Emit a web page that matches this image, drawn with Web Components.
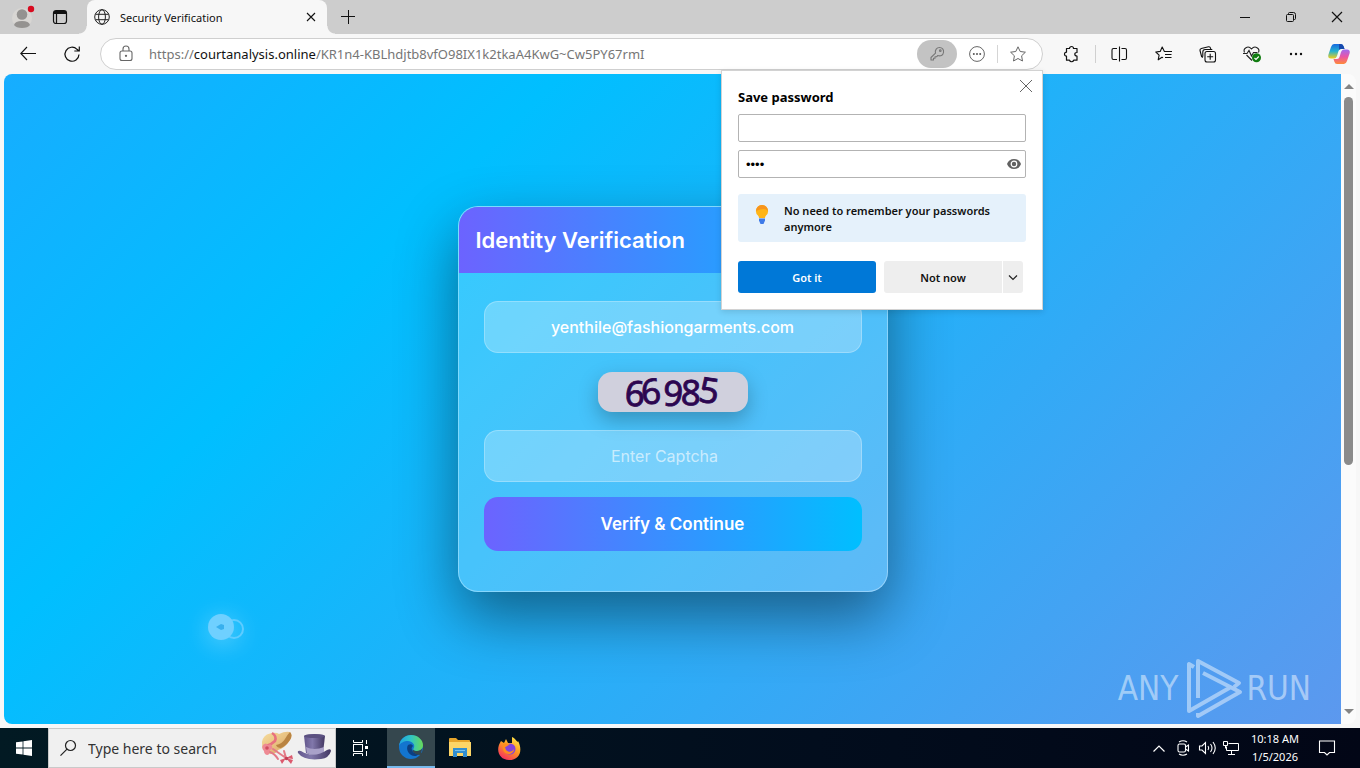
<!DOCTYPE html>
<html lang="en">
<head>
<meta charset="utf-8">
<title>Security Verification</title>
<style>
html, body { margin: 0; height: 100%; }
body { font-family: "Open Sans", "Noto Sans", sans-serif; font-size: 12px; color: #1b1b1b; background: #f7f7f7; overflow: hidden; }
</style>
</head>
<body>
<desk-top></desk-top>
<script>
const define = (name, html) => {
  const t = document.createElement('template');
  t.innerHTML = `<style>*{box-sizing:border-box} button{font:inherit;color:inherit;border:0;background:none;padding:0;margin:0} input{font:inherit;margin:0;outline:0} svg{display:block;overflow:visible}</style>` + html;
  customElements.define(name, class extends HTMLElement {
    constructor() {
      super();
      this.attachShadow({ mode: 'open' }).append(t.content.cloneNode(true));
    }
    connectedCallback() {
      const b = this.shadowRoot.querySelector('[data-label]');
      if (b && this.hasAttribute('label')) b.setAttribute('aria-label', this.getAttribute('label'));
    }
  });
};

define('icon-button', `
<style>
:host{display:flex;flex:none;width:32px}
button{display:flex;align-items:center;justify-content:center;width:100%;height:100%;border-radius:inherit}
</style>
<button type="button" data-label><slot></slot></button>`);

define('browser-tab', `
<style>
:host{display:flex;align-items:center;position:relative;width:240px;height:34px;padding:0 8px 0 7px;background:#f7f7f7;border-radius:8px 8px 0 0}
:host::before,:host::after{content:"";position:absolute;bottom:0;width:8px;height:8px}
:host::before{left:-8px;background:radial-gradient(circle at 0 0,transparent 7px,#f7f7f7 8px)}
:host::after{right:-8px;background:radial-gradient(circle at 100% 0,transparent 7px,#f7f7f7 8px)}
.t{flex:1;margin-left:10px;color:#111;font-family:"Noto Sans",sans-serif;font-size:11px}
icon-button{width:16px;height:16px}
</style>
<svg width="16" height="16" viewBox="0 0 16 16" fill="none" stroke="#222"><circle cx="8" cy="8" r="7.3"/><ellipse cx="8" cy="8" rx="3.4" ry="7.3"/><path d="M1.5 5.3h13M1.5 10.7h13"/></svg>
<span class="t"><slot></slot></span>
<icon-button label="Close tab"><svg width="10" height="10" viewBox="0 0 10 10" stroke="#111" stroke-width="1.1"><path d="M1 1l8 8M9 1l-8 8"/></svg></icon-button>`);

define('title-bar', `
<style>
:host{display:flex;align-items:stretch;height:34px;background:#cdcdcd}
.left{display:flex;align-items:center;width:87px;padding-left:12px;gap:18px}
.left icon-button{width:20px;height:24px}
.new{width:42px}
.space{flex:1}
.win{width:46px}
</style>
<div class="left">
<icon-button label="Profile"><svg width="22" height="22" viewBox="0 0 22 22"><circle cx="11" cy="12" r="10" fill="#d8d6d3"/><circle cx="11" cy="8.500" r="5.300" fill="#949290"/><path d="M3 19q1-4 8-4t8 4q-2 3-8 3t-8-3z" fill="#949290"/><circle cx="20" cy="3" r="3.200" fill="#d80b20"/></svg></icon-button>
<icon-button label="Tab actions"><svg width="16" height="16" viewBox="0 0 16 16" fill="none" stroke="#111" stroke-width="1.200"><rect x="1.500" y="1.500" width="13" height="13" rx="2.500"/><path d="M2 3.500h12" stroke-width="3"/><path d="M4.500 4v10"/></svg></icon-button>
</div>
<browser-tab>Security Verification</browser-tab>
<icon-button class="new" label="New tab"><svg width="14" height="14" viewBox="0 0 14 14" stroke="#111"><path d="M7.500 0v14M0 6.500h14"/></svg></icon-button>
<div class="space"></div>
<icon-button class="win" label="Minimize"><svg width="10" height="10" viewBox="0 0 10 10" stroke="#111"><path d="M0 5.500h10"/></svg></icon-button>
<icon-button class="win" label="Restore"><svg width="10" height="10" viewBox="0 0 10 10" fill="none" stroke="#111"><rect x=".5" y="2.500" width="7" height="7" rx="1"/><path d="M2.500 2V1.500q0-1 1-1h4q2 0 2 2v4q0 1-1 1H8"/></svg></icon-button>
<icon-button class="win" label="Close"><svg width="10" height="10" viewBox="0 0 10 10" stroke="#111" stroke-width="1.200"><path d="M0 0l10 10M10 0L0 10"/></svg></icon-button>`);

define('address-bar', `
<style>
:host{display:flex;align-items:center;height:32px;background:#fff;border:1px solid #cfcfcf;border-radius:16px;padding:0 8px 0 17px}
a{flex:1;margin-left:15px;color:#767676;text-decoration:none;white-space:nowrap;font-family:"Noto Sans",sans-serif;font-size:13px}
b{font-weight:400;color:#111}
.key{width:40px;height:28px;border-radius:14px;background:#c3c3c3;margin-right:4px}
i{width:1px;height:18px;background:#d5d5d5;margin:0 4px}
</style>
<svg width="16" height="18" viewBox="0 0 16 18" fill="none" stroke="#666" stroke-width="1.100"><rect x="2" y="6" width="12" height="9.500" rx="2"/><path d="M5 6V4q0-3 3-3t3 3v2"/><circle cx="8" cy="10.800" r=".6" fill="#666"/></svg>
<a href="#">https://<b>courtanalysis.online</b>/KR1n4-KBLhdjtb8vfO98IX1k2tkaA4KwG~Cw5PY67rmI</a>
<icon-button class="key" label="Passwords"><svg width="16" height="16" viewBox="0 0 16 16" fill="none" stroke="#777" stroke-width="1.100" stroke-linejoin="round"><path d="M6.500 7.200C5.700 4 7.800 1.500 10.500 1.500S15 3.500 14.500 6.500 11.500 10.500 8.800 9.500L7.500 10.800H6V12.300H4.500V14H2v-2.500z"/><circle cx="11.300" cy="4.700" r=".8"/></svg></icon-button>
<icon-button label="More"><svg width="16" height="16" viewBox="0 0 16 16" fill="none" stroke="#666"><circle cx="8" cy="8" r="7.400"/><g fill="#555" stroke="none"><circle cx="4.800" cy="8" r="1"/><circle cx="8" cy="8" r="1"/><circle cx="11.200" cy="8" r="1"/></g></svg></icon-button>
<i></i>
<icon-button label="Add to favorites"><svg width="16" height="16" viewBox="0 0 16 16" fill="none" stroke="#666" stroke-linejoin="round"><path d="M8 .8l2.200 4.700 5.200.7-3.800 3.600.9 5.200L8 12.500 3.500 15l.9-5.200L.6 6.200l5.200-.7z"/></svg></icon-button>`);

define('tool-bar', `
<style>
:host{display:flex;align-items:center;height:40px;padding:0 5px 0 12px;background:#f7f7f7}
icon-button{height:32px;margin-left:12px}
.first{margin-left:0}
address-bar{flex:1;margin-left:12px}
i{width:1px;height:18px;background:#d0d0d0;margin:0 -5px 0 8px}
</style>
<icon-button class="first" label="Back"><svg width="16" height="14" viewBox="0 0 16 14" fill="none" stroke="#111" stroke-width="1.100"><path d="M16 6.500H.8M7 0L.8 6.500 7 13"/></svg></icon-button>
<icon-button label="Refresh"><svg width="16" height="16" viewBox="0 0 16 16" fill="none" stroke="#111" stroke-width="1.200"><path d="M15 8.500A7 7 0 1 1 13 3.300L15 5M15.300 .5V5h-5"/></svg></icon-button>
<address-bar></address-bar>
<icon-button label="Extensions"><svg width="16" height="16" viewBox="0 0 16 16" fill="none" stroke="#111" stroke-width="1.200" stroke-linejoin="round"><path d="M3.500 2.500h3a2 2 0 0 1 4 0h3.500v4q-2.200 0-2.200 1.700T14 10v4.200h-3.300a2.200 2.200 0 0 1-4.200 0h-3v-4a2 2 0 1 1 0-4z"/></svg></icon-button>
<i></i>
<icon-button label="Split screen"><svg width="16" height="16" viewBox="0 0 16 16" fill="none" stroke="#111" stroke-width="1.100"><path d="M6 2.500H2.500q-1.500 0-1.500 1.500v8q0 1.500 1.500 1.500H6M10.500 2.500h3.500q1.500 0 1.500 1.500v8q0 1.500-1.500 1.500h-3.500M8.500 .5v15"/></svg></icon-button>
<icon-button label="Favorites"><svg width="16" height="16" viewBox="0 0 16 16" fill="none" stroke="#111" stroke-width="1.100" stroke-linejoin="round"><path d="M8 11.800l-1-.6-3.800 2.600.9-4.700L.8 6l4.400-.6L7.200 1l2.200 4.500H17M10 8.500h6.500M10 11.500h6.500"/></svg></icon-button>
<icon-button label="Collections"><svg width="16" height="16" viewBox="0 0 16 16" fill="none" stroke="#111" stroke-width="1.100" stroke-linejoin="round"><rect x="6" y="5.500" width="10.500" height="10.500" rx="2"/><path d="M11.200 7.800v6M8.200 10.800h6M3.800 11.500L2.600 10.500 1 4.500q-.3-1.600 1.300-2L9.500.8q1.600-.3 2 1.300l.3.900M3.800 10.500V6q0-2.500 2.500-2.500h7"/></svg></icon-button>
<icon-button label="Browser essentials"><svg width="18" height="16" viewBox="0 0 18 16" fill="none" stroke="#222" stroke-width="1.100"><path d="M10 14.500L4.500 9M2.500 6.500C.7 2.500 6-1.200 9.500 3 13-1.200 18.300 2.500 16.500 6.500M1 7.500h4l2-3 2.500 5.500 2-3.500h4"/><circle cx="14.500" cy="11.800" r="4.500" fill="#107c10" stroke="none"/><path d="M12.500 12l1.500 1.500 2.800-3" stroke="#fff"/></svg></icon-button>
<icon-button label="Settings and more"><svg width="14" height="4" viewBox="0 0 14 4" fill="#111"><circle cx="3" cy="2" r="1.200"/><circle cx="8" cy="2" r="1.200"/><circle cx="13" cy="2" r="1.200"/></svg></icon-button>
<icon-button label="Copilot"><svg width="22" height="20" viewBox="0 0 22 20"><defs><linearGradient id="a" x2="0" y2="1"><stop stop-color="#1769e0"/><stop offset=".5" stop-color="#25b2cf"/><stop offset="1" stop-color="#f3cf18"/></linearGradient><linearGradient id="b" x2="0" y2="1"><stop stop-color="#a06af0"/><stop offset=".5" stop-color="#eb55a5"/><stop offset="1" stop-color="#ff8b38"/></linearGradient></defs><path d="M6 0h7q2 0 2.700 2.500L16.500 5H13q-2 0-2.500 2L9 12q-.8 2.500-3 2.500H3Q-.3 14.500.3 11L3 3q1-3 3-3z" fill="url(#a)"/><path d="M16 20H9q-2 0-2.700-2.500L5.500 15H9q2 0 2.500-2L13 8q.8-2.500 3-2.500h3q3.300 0 2.700 3.500L19 17q-1 3-3 3z" fill="url(#b)"/><path d="M11 0h2q2 0 2.700 2.500L16.500 5H13q-1.500 0-2 1z" fill="#1749ad"/></svg></icon-button>`);

define('identity-card', `
<style>
:host{display:block;width:430px;border:1px solid rgba(255,255,255,.34);border-radius:20px;background:rgba(255,255,255,.2);box-shadow:0 25px 60px rgba(0,0,0,.45);overflow:hidden;color:#fff;font-family:"Inter",sans-serif}
h1{margin:0;height:66px;padding:0 17px;font-size:22px;font-weight:600;line-height:66px;background:linear-gradient(90deg,#6c63ff,#00bfff)}
form{display:flex;flex-direction:column;align-items:center;padding:28px 25px 40px}
input{width:100%;height:52px;border:1px solid rgba(255,255,255,.25);border-radius:14px;background:rgba(255,255,255,.25);text-align:center;color:#fff;font-size:16px;padding:0 16px}
.cap{padding-right:32px}
.mail{font-weight:500}
input::placeholder{color:rgba(255,255,255,.62);opacity:1}
svg{margin:19px 0 18px;border-radius:14px;background:#d0d0dd;box-shadow:0 8px 20px rgba(0,0,0,.25)}
text{font-family:"Noto Sans",sans-serif;font-size:35px;fill:#2c0650;stroke:#2c0650;stroke-width:.8;text-anchor:middle}
button{width:100%;height:54px;margin-top:15px;border-radius:14px;background:linear-gradient(90deg,#6c63ff,#00bfff);font-size:17px;font-weight:600}
</style>
<h1>Identity Verification</h1>
<form>
<input class="mail" type="text" aria-label="Email" value="yenthile@fashiongarments.com">
<svg width="150" height="40" viewBox="0 0 150 40" role="img" aria-label="Captcha"><text x="37" y="34" transform="rotate(3 37 22)">6</text><text x="53" y="32" transform="rotate(-5 53 20)">6</text><text x="75" y="34" transform="rotate(4 75 22)">9</text><text x="93" y="33" transform="rotate(2 93 21)">8</text><text x="111" y="31" transform="rotate(8 111 20)">5</text></svg>
<input class="cap" type="text" aria-label="Captcha" placeholder="Enter Captcha">
<button type="button">Verify &amp; Continue</button>
</form>`);

define('run-watermark', `
<style>
:host{display:flex;align-items:center;gap:6px;color:rgba(255,255,255,.48);font-family:"Liberation Sans Narrow","DejaVu Sans Condensed","Liberation Sans",sans-serif;font-size:33px;line-height:64px}
</style>
<span>ANY</span>
<svg width="56" height="62" viewBox="0 0 56 62" fill="none" stroke="#fff" stroke-width="4" stroke-linejoin="round" opacity=".46"><path d="M10 9L5 6v47l42-24M14 40V3l41 22-5 4M19 15l37 19-42 24v-3"/></svg>
<span>RUN</span>`);

define('scroll-bar', `
<style>
:host{display:flex;flex-direction:column;align-items:center;width:15px;padding:10px 0;background:#fbfbfb;border-radius:0 8px 8px 0}
div{flex:1;width:9px;margin:8px 0}
b{display:block;height:61%;border-radius:5px;background:#8b8b8b}
</style>
<svg width="10" height="5" viewBox="0 0 10 5" fill="#858585"><path d="M5 0l5 5H0z"/></svg>
<div><b></b></div>
<svg width="10" height="5" viewBox="0 0 10 5" fill="#858585"><path d="M5 5l5-5H0z"/></svg>`);

define('web-page', `
<style>
:host{display:flex}
main{flex:1;position:relative;display:flex;align-items:center;justify-content:center;border-radius:8px 0 0 8px;background:linear-gradient(135deg,#17adff,#00bfff 28%,#6495ed 106%);overflow:hidden}
run-watermark{position:absolute;right:30px;bottom:3px}
.ptr{position:absolute;left:204px;bottom:81px;filter:drop-shadow(0 4px 12px rgba(255,255,255,.35))}
</style>
<main>
<identity-card></identity-card>
<svg class="ptr" width="36" height="30" viewBox="0 0 36 30"><circle cx="26" cy="16" r="9" fill="none" stroke="#5fccff" stroke-width="2"/><circle cx="13" cy="14" r="13" fill="#6fd0ff"/><path d="M8 14l5-3 3 1v4l-3 1z" fill="#38b0ee"/></svg>
<run-watermark></run-watermark>
</main>
<scroll-bar></scroll-bar>`);

define('save-password', `
<style>
:host{display:block;width:322px;padding:17px 16px 16px;background:#fff;border:1px solid #d2d2d2;color:#111;font-family:"Noto Sans",sans-serif;box-shadow:0 2px 6px rgba(0,0,0,.12)}
h2{margin:0 0 8px;font-size:13px;font-weight:700;line-height:18px;color:#000}
.close{position:absolute;right:8px;top:7px;width:16px;height:16px}
.field{position:relative;display:flex;margin-bottom:8px}
.field input{width:100%;height:28px;border:1px solid #b3b3b3;border-radius:2px;padding:0 30px 0 7px;font-size:12px;background:#fff}
.field .pw{font-family:"Liberation Sans",sans-serif;font-size:13px}
.eye{position:absolute;right:4px;top:6px;width:16px;height:16px}
.tip{display:flex;gap:14px;margin-top:16px;padding:9px 16px 7px;height:48px;background:#e5f1fb;border-radius:3px;font-size:11px;font-weight:600;line-height:16px}
.row{display:flex;margin-top:19px;font-size:11px;font-weight:600}
.row button{height:32px;background:#eee}
.row .ok{width:138px;background:#0078d7;color:#fff;border-radius:3px;margin-right:8px}
.row .no{width:118px;border-radius:3px 0 0 3px;margin-right:1px}
.row .dd{width:20px;border-radius:0 3px 3px 0;display:flex;align-items:center;justify-content:center}
</style>
<h2>Save password</h2>
<icon-button class="close" label="Close"><svg width="12" height="12" viewBox="0 0 12 12" stroke="#666"><path d="M0 0l12 12M12 0L0 12"/></svg></icon-button>
<div class="field"><input type="text" aria-label="Username"></div>
<div class="field"><input class="pw" type="password" aria-label="Password" value="1234"><icon-button class="eye" label="Show password"><svg width="14" height="10" viewBox="0 0 14 10"><path d="M0 5Q2 0 7 0t7 5q-2 5-7 5T0 5z" fill="#616161"/><circle cx="7" cy="5" r="2.800" fill="#616161" stroke="#fff" stroke-width="1.200"/></svg></icon-button></div>
<div class="tip"><svg width="16" height="22" viewBox="0 0 16 22"><path d="M8 2a6 6 0 0 1 4 10.500q-1 1-1 2.500H5q0-1.500-1-2.500A6 6 0 0 1 8 2z" fill="#ffb517"/><path d="M8 2a6 6 0 0 1 6 6q-3-4-12 0a6 6 0 0 1 6-6z" fill="#f7941d"/><path d="M5 15.500h6v2L9.500 21h-3L5 17.500z" fill="#3f7be8"/></svg><span>No need to remember your passwords anymore</span></div>
<div class="row"><button class="ok" type="button">Got it</button><button class="no" type="button">Not now</button><button class="dd" type="button" aria-label="More options"><svg width="8" height="5" viewBox="0 0 8 5" fill="none" stroke="#222" stroke-width="1.200"><path d="M0 .5l4 4 4-4"/></svg></button></div>`);

define('task-bar', `
<style>
:host{display:flex;height:40px;background:linear-gradient(90deg,#021a23,#020d1d 60%,#020616);color:#fff}
icon-button{width:48px}
.search{display:flex;align-items:center;width:288px;background:#f0f0f0;border:1px solid #c9c9c9;padding:0 4px 0 11px}
.search input{flex:1;min-width:0;border:0;background:none;padding:0 0 0 12px;font-size:14px;font-family:"Noto Sans",sans-serif;color:#333}
.search input::placeholder{color:#333;opacity:1}
.apps{display:flex;gap:1px}
.edge{margin-left:2px;background:#35474e;border-bottom:2px solid #76b9ed}
.tray{display:flex;flex:1;justify-content:flex-end}
.tray icon-button{width:24px}
.clock{width:64px;text-align:center;font-family:"Noto Sans",sans-serif;font-size:11px;line-height:18px;padding-top:2px}
.tray .note{width:40px;margin-right:13px}
</style>
<icon-button label="Start"><svg width="16" height="16" viewBox="0 0 16 16" fill="#fff"><path d="M0 2.300L6.600 1.400v6.200H0zM7.400 1.300L16 0v7.600H7.400zM0 8.400h6.600v6.200L0 13.700zM7.400 8.400H16V16l-8.600-1.300z"/></svg></icon-button>
<label class="search"><svg width="16" height="16" viewBox="0 0 16 16" fill="none" stroke="#222" stroke-width="1.200"><circle cx="10.500" cy="5.500" r="5"/><path d="M7 9.200L.5 15.700"/></svg>
<input type="text" aria-label="Search" placeholder="Type here to search">
<svg width="70" height="34" viewBox="0 0 70 34"><defs><linearGradient id="s" x2="1" y2="1"><stop stop-color="#f7dfa0"/><stop offset="1" stop-color="#d9a260"/></linearGradient><linearGradient id="h"><stop stop-color="#63578c"/><stop offset=".4" stop-color="#8178ab"/><stop offset="1" stop-color="#423762"/></linearGradient></defs>
<path d="M1 11Q2 4 9 2.500q6-1.500 9 .5 6-3 11-2 3 3 0 8-5 8-12 10-2 4-7 4Q0 21 1 11z" fill="url(#s)"/>
<path d="M29 1q3 3 0 8-4 6-9 8-4 0-5-3 6-1 9-6 2-4 5-7z" fill="#b98442"/>
<path d="M11 2q5 3 3 8-4 4-9 5" stroke="#e8707e" stroke-width="2.600" fill="none"/>
<path d="M2 14q3-3 5 0 3-2 4 1 1 3-2 4 0 5-3 5-3-1-3-4-3-3-1-6z" fill="#ee8a94"/><circle cx="6" cy="17" r="1.800" fill="#cf4d60"/>
<path d="M9 21q5 2 8 7M12 18l13 9M23 20l2 7" stroke="#e37a86" stroke-width="2" fill="none" stroke-linecap="round"/>
<path d="M25 27l6-3 1 4zM25 27l-6 2 2 4zM25 27l7 2-2 4z" fill="#dc5a6e"/><circle cx="25.500" cy="27.500" r="1.800" fill="#c23d54"/>
<path d="M43 5q10-4 21 0l-2 17q-8 4-17 0z" fill="url(#h)"/><ellipse cx="53.500" cy="5" rx="10.500" ry="2" fill="#5b5180"/><path d="M45 16q8 4 18 0v6q-9 4-17 0z" fill="#a9a1c9"/><path d="M37 22q-1-3 3-2 13 8 26-1 4-2 4 1-2 7-10 8-17 2-23-6z" fill="url(#h)"/></svg></label>
<div class="apps">
<icon-button label="Task view"><svg width="16" height="16" viewBox="0 0 16 16" fill="none" stroke="#fff"><rect x="1.500" y="4.500" width="9" height="7"/><path d="M1.500 0v2.500h9V0M1.500 16v-2.500h9V16M14.500 0v4M14.500 11v5"/><path d="M13 6h3v3h-3z" fill="#fff" stroke="none"/></svg></icon-button>
<icon-button class="edge" label="Edge"><svg width="24" height="24" viewBox="0 0 24 24"><defs><linearGradient id="e" x2="1"><stop stop-color="#1da1e4"/><stop offset=".5" stop-color="#31c6c2"/><stop offset="1" stop-color="#69d957"/></linearGradient></defs><circle cx="12" cy="12" r="12" fill="#1375cf"/><path d="M0 11C1 4 6 0 12 0c7 0 12 5 12 10 0 4-3 6-6 6-3.500 0-4.500-1.300-3.500-2.500C17 10 13 6 9 6 5 6 1 8 0 11z" fill="url(#e)"/><path d="M9 10c-3 5 2 12 8 11l5-3c-4 2-8 0-9-3-1-2 0-3 1-4-1-2-3-2-5-1z" fill="#0b3f82"/><path d="M14.500 13.500c-1 1.200 0 2.500 3.500 2.500 2 0 4-.8 5.500-3L22 18l3-1-3 3q-6 0-8.500-4z" fill="#35474e"/></svg></icon-button>
<icon-button label="File Explorer"><svg width="22" height="20" viewBox="0 0 22 20"><path d="M0 1q0-1 1-1h6l2 2h11q1 0 1 1v15H0z" fill="#e7a52b"/><path d="M0 4h22v14H0z" fill="#fcd567"/><path d="M4 10h14v9h-4v-4H8v4H4z" fill="#318ed0"/><path d="M6 12h10v1H6z" fill="#76c1ef"/></svg></icon-button>
<icon-button label="Firefox"><svg width="23" height="23" viewBox="0 0 23 23"><defs><linearGradient id="f" x1=".8" x2=".2" y2="1"><stop stop-color="#ffe74a"/><stop offset=".45" stop-color="#ff9a22"/><stop offset="1" stop-color="#f52663"/></linearGradient></defs><path d="M3 4l3 2 2-4 2 4 4 0L14 0c3 1 4 4 6 5l0-1c5 9 2 19-9 19C1 23-3 13 3 4z" fill="url(#f)"/><circle cx="12" cy="12" r="5.500" fill="#8343dc"/><path d="M5 7c3-2 6 0 7 1-3 0-3 2-5 2l1 3c3 3 6 2 8-1 0 6-9 7-11 1-1-3 0-6 0-6z" fill="#ff8d1f"/></svg></icon-button>
</div>
<div class="tray">
<icon-button label="Hidden icons"><svg width="12" height="7" viewBox="0 0 12 7" fill="none" stroke="#fff" stroke-width="1.200"><path d="M.5 6.500L6 1l5.500 5.500"/></svg></icon-button>
<icon-button label="Camera"><svg width="12" height="16" viewBox="0 0 12 16" fill="none" stroke="#fff" stroke-width="1.100"><rect x="1" y="4" width="7.500" height="8" rx="1.500"/><path d="M8.500 7l3-2v6l-3-2M2 2q4-2.500 8 0M2 14q4 2.500 8 0"/></svg></icon-button>
<icon-button label="Volume"><svg width="17" height="14" viewBox="0 0 17 14" fill="none" stroke="#fff" stroke-width="1.100"><path d="M.5 5H3l3.500-3.500v11L3 9H.5zM9 5q1.500 2 0 4M11.500 3q3 4 0 8M14 1q4.500 6 0 12"/></svg></icon-button>
<icon-button label="Network"><svg width="16" height="14" viewBox="0 0 16 14" fill="none" stroke="#fff"><path d="M5.500 2.500h10v7h-12v-4M8.500 9.500v4M5 13.500h7M.5.500h4v4h-4zM2.500 4.500v3"/></svg></icon-button>
<div class="clock">10:18 AM<br>1/5/2026</div>
<icon-button class="note" label="Notifications"><svg width="16" height="16" viewBox="0 0 16 16" fill="none" stroke="#fff" stroke-width="1.100"><path d="M.5 1h15v11.500h-5L8 15l-2.500-2.500h-5z"/></svg></icon-button>
</div>`);

define('desk-top', `
<style>
:host{display:flex;flex-direction:column;height:100vh;min-height:560px;position:relative}
title-bar,tool-bar,task-bar{flex:none}
web-page{flex:1;margin:0 4px 4px}
save-password{position:absolute;right:317px;top:70px}
</style>
<title-bar></title-bar>
<tool-bar></tool-bar>
<web-page></web-page>
<task-bar></task-bar>
<save-password></save-password>`);
</script>
</body>
</html>
